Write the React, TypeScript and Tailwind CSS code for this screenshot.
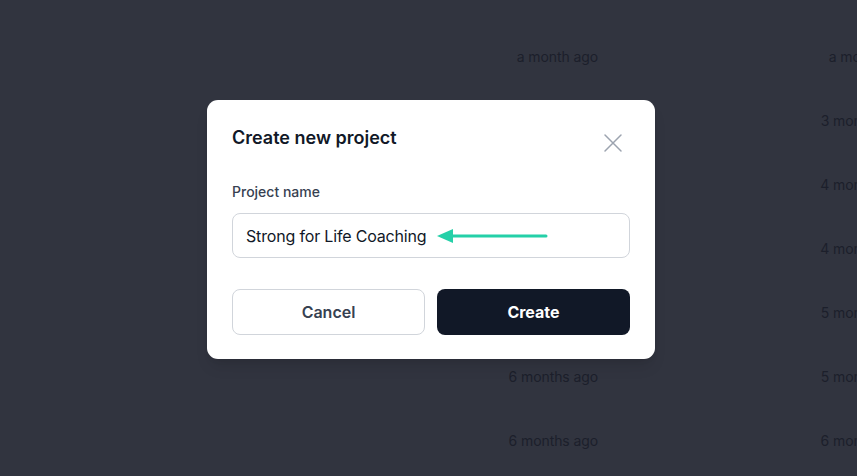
import React from "react";

const col1 = ["a month ago", "", "", "", "", "6 months ago", "6 months ago"];
const col2 = ["a month ago", "3 months ago", "4 months ago", "4 months ago", "5 months ago", "5 months ago", "6 months ago"];

export default function App() {
  return (
    <div
      className="relative w-[857px] h-[476px] overflow-hidden bg-[#31343f]"
      style={{ fontFamily: "Inter, 'Liberation Sans', sans-serif" }}
    >
      <div className="flex pt-[47px] text-[14px] leading-5 text-[#1c1f2b]">
        <div className="w-[598px] shrink-0 flex flex-col gap-[44px] text-right">
          {col1.map((t, i) => (
            <div key={i} className="h-5 tracking-[-0.1px]">{t}</div>
          ))}
        </div>
        <div className="w-[312px] shrink-0 flex flex-col gap-[44px] text-right">
          {col2.map((t, i) => (
            <div key={i} className="h-5 whitespace-nowrap tracking-[-0.1px]">{t}</div>
          ))}
        </div>
      </div>

      <div className="absolute left-[207px] top-[100px] w-[448px] rounded-[11px] bg-white px-[25px] pt-[24px] pb-[24px] shadow-lg">
        <div className="flex items-center justify-between h-[28px]">
          <h2 className="text-[18px] font-semibold leading-7 text-[#111827]">Create new project</h2>
          <button className="mr-[6px] mt-[10px] text-[#9ca3af]">
            <svg width="22" height="22" viewBox="0 0 22 22" fill="none" stroke="currentColor" strokeWidth="1.5" strokeLinecap="round">
              <path d="M3 3L19 19M19 3L3 19" />
            </svg>
          </button>
        </div>
        <label className="block mt-[30px] text-[14px] leading-5 font-medium text-[#374151]">Project name</label>
        <div className="relative mt-[11px] h-[45px] rounded-lg border border-[#d1d5db] flex items-center px-[13px]">
          <span className="text-[16px] text-[#111827] tracking-[-0.17px]">Strong for Life Coaching</span>
          <svg className="ml-[10px]" width="112" height="16" viewBox="0 0 112 16">
            <path d="M1 8L17 1V15Z" fill="#25d0a8" />
            <path d="M15 8H110" stroke="#25d0a8" strokeWidth="3" strokeLinecap="round" />
          </svg>
        </div>
        <div className="mt-[31px] grid grid-cols-2 gap-3">
          <button className="h-[46px] rounded-lg border border-[#d1d5db] bg-white text-[16px] font-semibold text-[#374151]">
            Cancel
          </button>
          <button className="h-[46px] rounded-lg bg-[#111827] text-[16px] font-bold text-white">
            Create
          </button>
        </div>
      </div>
    </div>
  );
}
